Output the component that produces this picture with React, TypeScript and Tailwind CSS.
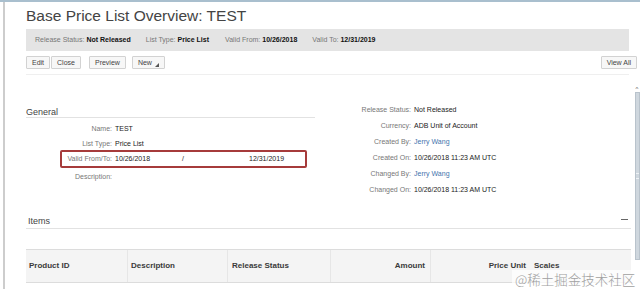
import React from "react";

const leftRows = [
  { label: "Name:", value: "TEST" },
  { label: "List Type:", value: "Price List" },
];

const rightRows: { label: string; value: string; link?: boolean }[] = [
  { label: "Release Status:", value: "Not Released" },
  { label: "Currency:", value: "ADB Unit of Account" },
  { label: "Created By:", value: "Jerry Wang", link: true },
  { label: "Created On:", value: "10/26/2018 11:23 AM UTC" },
  { label: "Changed By:", value: "Jerry Wang", link: true },
  { label: "Changed On:", value: "10/26/2018 11:23 AM UTC" },
];

function Btn({ children }: { children: React.ReactNode }) {
  return (
    <button className="h-[13px] px-[5px] flex items-center border border-[#d2d2d2] bg-[#f7f7f7] text-[7px] leading-none text-[#444] rounded-[1px]">
      {children}
    </button>
  );
}

export default function App() {
  return (
    <div
      className="relative w-[640px] h-[289px] overflow-hidden bg-white border-t-2 border-[#a9bfce] flex"
      style={{ fontFamily: '"Liberation Sans", Arial, sans-serif' }}
    >
      {/* left frame line */}
      <div className="w-[3px]" />
      <div className="w-[2px] bg-[#cdcdcd]" />

      {/* content */}
      <div className="ml-[21px] w-[606px] flex flex-col">
        <h1 className="mt-[4px] text-[15.5px] leading-[20px] text-[#444]">
          Base Price List Overview: TEST
        </h1>

        {/* status bar */}
        <div className="mt-[3px] mr-[2px] h-[22px] bg-[#e4e4e4] flex items-center pl-[9px] text-[7px] text-[#777]">
          <span>
            Release Status: <b className="text-[#111]">Not Released</b>
          </span>
          <span className="ml-[15px]">
            List Type: <b className="text-[#111]">Price List</b>
          </span>
          <span className="ml-[16px]">
            Valid From: <b className="text-[#111]">10/26/2018</b>
          </span>
          <span className="ml-[15px]">
            Valid To: <b className="text-[#111]">12/31/2019</b>
          </span>
        </div>

        {/* toolbar */}
        <div className="mt-[5px] flex items-center">
          <Btn>Edit</Btn>
          <div className="ml-[1px]">
            <Btn>Close</Btn>
          </div>
          <div className="ml-[8px]">
            <Btn>Preview</Btn>
          </div>
          <div className="ml-[6px]">
            <Btn>
              New
              <svg width="4" height="4" viewBox="0 0 4 4" className="ml-[3px] mt-[4px]">
                <path d="M4 0 L4 4 L0 4 Z" fill="#555" />
              </svg>
            </Btn>
          </div>
          <div className="ml-auto mr-[-6px]">
            <Btn>View All</Btn>
          </div>
        </div>
        <div className="mt-[5px] mr-[2px] border-t border-[#efefef]" />

        {/* general */}
        <div className="grid grid-cols-[290px_1fr] items-start">
          <div className="mt-[31px] mr-[1px]">
            <div className="h-[12px] border-b border-[#e2e2e2] text-[9px] leading-[12px] text-[#444]">
              General
            </div>
            <div className="mt-[4px] text-[7px]">
              {leftRows.map((r) => (
                <div key={r.label} className="h-[15px] flex items-center">
                  <span className="w-[86px] text-right text-[#777]">{r.label}</span>
                  <span className="ml-[3px] text-[#222]">{r.value}</span>
                </div>
              ))}
              <div className="ml-[34px] mt-[-2px] w-[247px] h-[18px] border-2 border-[#a63b3b] rounded-[2px] flex items-center">
                <span className="w-[50px] text-right text-[#777]">Valid From/To:</span>
                <span className="ml-[3px] w-[67px] text-[#222]">10/26/2018</span>
                <span className="w-[67px] text-[#222]">/</span>
                <span className="text-[#222]">12/31/2019</span>
              </div>
              <div className="h-[18px] flex items-center">
                <span className="w-[86px] text-right text-[#777]">Description:</span>
              </div>
            </div>
          </div>

          <div className="mt-[27px] text-[7px]">
            {rightRows.map((r) => (
              <div key={r.label} className="h-[16px] flex items-center">
                <span className="w-[95px] text-right text-[#777]">{r.label}</span>
                <span className={`ml-[3px] ${r.link ? "text-[#3f74ad]" : "text-[#222]"}`}>
                  {r.value}
                </span>
              </div>
            ))}
          </div>
        </div>

        {/* items */}
        <div className="mt-[17px] h-[14px] border-b border-[#e2e2e2] flex items-center justify-between pl-[2px] text-[9px] text-[#444]">
          <span>Items</span>
          <div className="self-start mt-[4px] mr-[3px] w-[7px] h-[1px] bg-[#666]" />
        </div>

        <div className="mt-[20px] h-[34px] border-t border-b border-[#dcdcdc] bg-[#f4f4f4] grid grid-cols-[101px_100px_103px_100px_100px_1fr] text-[8px] font-semibold text-[#3a3a3a]">
          <div className="pl-[3px] flex items-center">Product ID</div>
          <div className="border-l border-[#e6e6e6] pl-[3px] flex items-center">Description</div>
          <div className="border-l border-[#e6e6e6] pl-[4px] flex items-center">Release Status</div>
          <div className="border-l border-[#e6e6e6] pr-[5px] flex items-center justify-end">Amount</div>
          <div className="border-l border-[#e6e6e6] pr-[4px] flex items-center justify-end">Price Unit</div>
          <div className="pl-[4px] flex items-center">Scales</div>
        </div>
      </div>

      {/* scrollbar */}
      <div className="ml-[3px] w-[6px] flex flex-col items-center">
        <div className="mt-[84px] text-[6px] leading-[6px] text-[#555]">^</div>
        <div className="w-[5px] h-[168px] bg-[#cfd7de] border border-[#b9c3cc] flex items-center justify-center">
          <div className="w-[3px] h-[6px] border-t border-b border-[#eef2f5]" />
        </div>
      </div>

      {/* watermark */}
      <div
        className="absolute left-[512px] top-[268px] px-[3px] h-[19px] flex items-center bg-white/70 text-[13.5px] text-[#a0a0a0]"
        style={{ fontFamily: '"Noto Sans CJK SC", sans-serif', fontWeight: 300 }}
      >
        @稀土掘金技术社区
      </div>
    </div>
  );
}
